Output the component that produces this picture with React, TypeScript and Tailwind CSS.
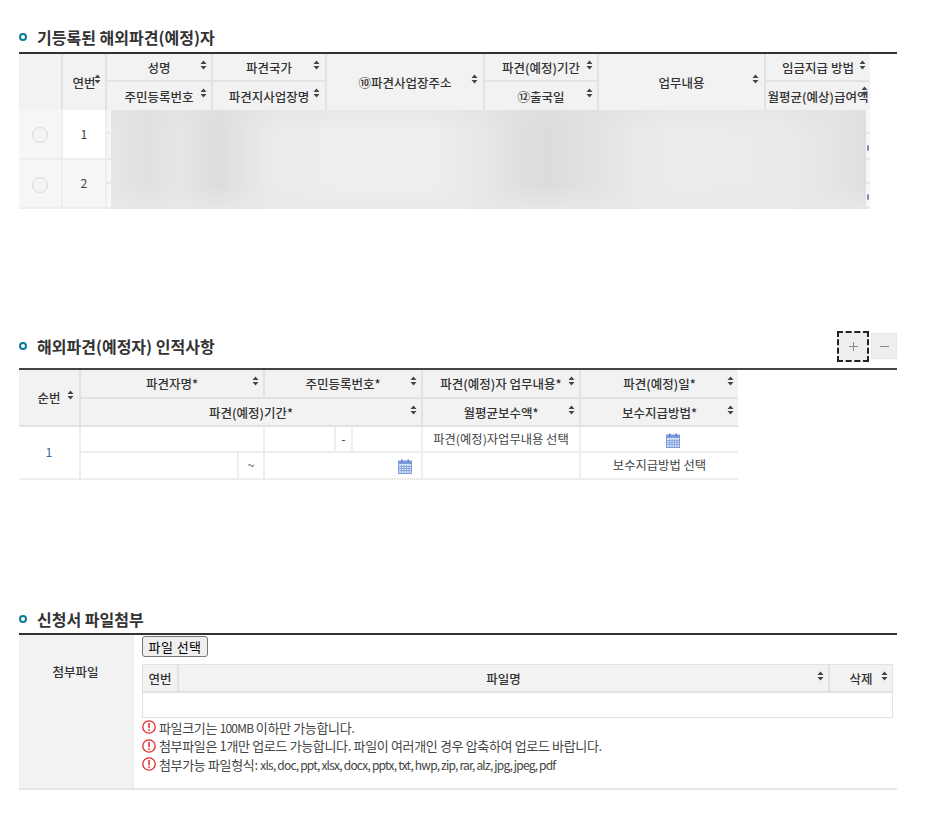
import React from "react";

const FONT = "font-['Noto_Sans_CJK_KR','Noto_Sans',sans-serif]";

function Sort({ className }: { className: string }) {
  return (
    <svg className={`absolute ${className}`} width="7" height="10" viewBox="0 0 7 10">
      <path d="M3.5 0.5 L6.5 4 H0.5 Z M3.5 9.5 L6.5 6 H0.5 Z" fill="#444" />
    </svg>
  );
}

function Calendar() {
  return (
    <svg width="14" height="15" viewBox="0 0 14 15" className="inline-block">
      <rect x="0.5" y="2" width="13" height="12.5" fill="#dbe4f7" stroke="#7c9ade" />
      <rect x="0.5" y="2" width="13" height="3" fill="#7c9ade" />
      <rect x="3" y="0.5" width="1.6" height="3" fill="#5f82cc" />
      <rect x="9.4" y="0.5" width="1.6" height="3" fill="#5f82cc" />
      <path d="M1 7.5H13M1 9.5H13M1 11.5H13M3.5 6V14M6 6V14M8.5 6V14M11 6V14" stroke="#7c9ade" strokeWidth="0.8" />
    </svg>
  );
}

function Alert() {
  return (
    <svg width="14" height="14" viewBox="0 0 14 14" className="shrink-0">
      <circle cx="7" cy="7" r="6.2" fill="#fff" stroke="#e5262b" strokeWidth="1.3" />
      <rect x="6.3" y="3" width="1.5" height="5.2" fill="#e5262b" />
      <rect x="6.3" y="9.3" width="1.5" height="1.6" fill="#e5262b" />
    </svg>
  );
}

function Title({ children }: { children: React.ReactNode }) {
  return (
    <div className="flex items-center gap-[10px]">
      <span className="w-[8px] h-[8px] rounded-full border-[2.5px] border-[#0b7a99] bg-white" />
      <h2 className="text-[16px] font-bold tracking-[0px] text-[#333]">{children}</h2>
    </div>
  );
}

const thn = "relative bg-[#f2f2f2] font-medium text-[12.5px] text-[#333] text-center whitespace-nowrap overflow-hidden border-[#e2e2e2] p-0 pt-[2px]";
const th = `${thn} border-r-2`;
const thb = "border-b-2";
const tdn = "text-center text-[12.3px] p-0 border-b-2 border-[#eeeeee]";
const td = `${tdn} border-r-2`;
const ink = "text-[#444]";

function RegisteredTable() {
  return (
    <div className="relative w-[851px]">
      <table className="table-fixed w-[851px] border-separate border-spacing-0">
        <colgroup>
          <col className="w-[44px]" />
          <col className="w-[44px]" />
          <col className="w-[106px]" />
          <col className="w-[114px]" />
          <col className="w-[158px]" />
          <col className="w-[114px]" />
          <col className="w-[167px]" />
          <col className="w-[104px]" />
        </colgroup>
        <thead>
          <tr className="h-[28px]">
            <th rowSpan={2} className={th}></th>
            <th rowSpan={2} className={th}>연번<Sort className="right-[4px] top-[20px]" /></th>
            <th className={`${th} ${thb}`}>성명<Sort className="right-[4px] top-[6px]" /></th>
            <th className={`${th} ${thb}`}>파견국가<Sort className="right-[5px] top-[6px]" /></th>
            <th rowSpan={2} className={th}>⑩파견사업장주소<Sort className="right-[5px] top-[20px]" /></th>
            <th className={`${th} ${thb}`}>파견(예정)기간<Sort className="right-[4px] top-[6px]" /></th>
            <th rowSpan={2} className={th}>업무내용<Sort className="right-[5px] top-[20px]" /></th>
            <th className={`${thn} ${thb}`}>임금지급 방법<Sort className="right-[4px] top-[6px]" /></th>
          </tr>
          <tr className="h-[28px]">
            <th className={th}>주민등록번호<Sort className="right-[4px] top-[6px]" /></th>
            <th className={th}>파견지사업장명<Sort className="right-[5px] top-[6px]" /></th>
            <th className={th}>⑫출국일<Sort className="right-[4px] top-[6px]" /></th>
            <th className={thn}>월평균(예상)급여액<Sort className="right-[2px] top-[4px]" /></th>
          </tr>
        </thead>
        <tbody>
          {[1, 2].map((n) => (
            <tr key={n} className={n === 1 ? "h-[50px]" : "h-[49px]"}>
              <td className={`${td} ${ink} bg-[#f6f6f6]`}>
                <span className="inline-block align-middle w-[16px] h-[16px] rounded-full border border-[#d9d9d9] bg-[#f4f4f4]" />
              </td>
              <td className={`${td} ${ink} ${n === 2 ? "bg-[#f6f6f6]" : "bg-white"}`}>{n}</td>
              <td colSpan={6} className="p-0 bg-[#f7f7f7] border-b-2 border-[#e8e8e8] align-top">
                <div className="h-[24px] border-b-2 border-[#e8e8e8]" />
              </td>
            </tr>
          ))}
        </tbody>
      </table>
      <div className="absolute left-[92px] top-[56px] w-[755px] h-[99px] bg-[linear-gradient(180deg,rgba(225,225,225,0.5)_0%,rgba(238,238,238,0)_22%,rgba(238,238,238,0)_75%,rgba(232,233,233,0.8)_100%),linear-gradient(90deg,#e6e6e6_0%,#e0e0e0_5%,#e6e6e6_9%,#dcdcdc_14%,#ebebeb_21%,#eeeeee_29%,#eeeeee_43%,#e8e8e8_49%,#dfdfdf_54%,#dcdcdc_58%,#e2e2e2_64%,#eaeaea_70%,#ececec_75%,#ebebeb_89%,#e3e3e3_97%,#dedede_100%)]" />
      <span className="absolute left-[848px] top-[91px] w-[2px] h-[6px] rounded-full bg-[#7f8fb8]" />
      <span className="absolute left-[848px] top-[140px] w-[2px] h-[6px] rounded-full bg-[#7f8fb8]" />
    </div>
  );
}

function PersonTable() {
  return (
    <table className="table-fixed w-[719px] border-separate border-spacing-0">
      <colgroup>
        <col className="w-[62px]" />
        <col className="w-[158px]" />
        <col className="w-[26px]" />
        <col className="w-[71px]" />
        <col className="w-[17px]" />
        <col className="w-[70px]" />
        <col className="w-[158px]" />
        <col className="w-[157px]" />
      </colgroup>
      <thead>
        <tr className="h-[29px]">
          <th rowSpan={2} className={`${th} ${thb}`}>순번<Sort className="right-[5px] top-[20px]" /></th>
          <th colSpan={2} className={`${th} ${thb}`}>파견자명*<Sort className="right-[4px] top-[6px]" /></th>
          <th colSpan={3} className={`${th} ${thb}`}>주민등록번호*<Sort className="right-[4px] top-[6px]" /></th>
          <th className={`${th} ${thb}`}>파견(예정)자 업무내용*<Sort className="right-[4px] top-[6px]" /></th>
          <th className={`${thn} ${thb}`}>파견(예정)일*<Sort className="right-[4px] top-[6px]" /></th>
        </tr>
        <tr className="h-[28px]">
          <th colSpan={5} className={`${th} ${thb}`}>파견(예정)기간*<Sort className="right-[4px] top-[6px]" /></th>
          <th className={`${th} ${thb}`}>월평균보수액*<Sort className="right-[4px] top-[6px]" /></th>
          <th className={`${thn} ${thb}`}>보수지급방법*<Sort className="right-[4px] top-[6px]" /></th>
        </tr>
      </thead>
      <tbody>
        <tr className="h-[26px]">
          <td rowSpan={2} className={`${td} text-[#3d6a9a]`}>1</td>
          <td colSpan={2} className={td}></td>
          <td className={td}></td>
          <td className={`${td} ${ink}`}>-</td>
          <td className={td}></td>
          <td className={`${td} ${ink}`}>파견(예정)자업무내용 선택</td>
          <td className={`${tdn} pl-[27px]`}><Calendar /></td>
        </tr>
        <tr className="h-[27px]">
          <td className={td}></td>
          <td className={`${td} ${ink}`}>~</td>
          <td colSpan={3} className={`${td} text-right pr-[9px]`}><Calendar /></td>
          <td className={td}></td>
          <td className={`${tdn} ${ink}`}>보수지급방법 선택</td>
        </tr>
      </tbody>
    </table>
  );
}

function FileTable() {
  return (
    <table className="table-fixed w-[751px] border-separate border-spacing-0 border border-[#e2e2e2]">
      <colgroup>
        <col className="w-[36px]" />
        <col />
        <col className="w-[62px]" />
      </colgroup>
      <thead>
        <tr className="h-[28px]">
          <th className={`${th} ${thb}`}>연번</th>
          <th className={`${th} ${thb}`}>파일명<Sort className="right-[4px] top-[6px]" /></th>
          <th className={`${thn} ${thb}`}>삭제<Sort className="right-[4px] top-[6px]" /></th>
        </tr>
      </thead>
      <tbody>
        <tr className="h-[24px]">
          <td colSpan={3}></td>
        </tr>
      </tbody>
    </table>
  );
}

const latin = "text-[12px] tracking-[-0.8px]";

export default function App() {
  const noteRow = "flex items-center gap-[3px] h-[18.5px] text-[13px] tracking-[-0.35px] text-[#444] whitespace-pre";
  return (
    <div className={`${FONT} w-[936px] h-[817px] bg-white pl-[19px] pr-[39px] pt-[22px] overflow-hidden`}>
      <section>
        <div className="h-[30px] flex items-center">
          <Title>기등록된 해외파견(예정)자</Title>
        </div>
        <div className="border-t-2 border-[#333]">
          <RegisteredTable />
        </div>
      </section>

      <section className="mt-[122px]">
        <div className="h-[30px] mb-[7px] flex items-center justify-between">
          <Title>해외파견(예정자) 인적사항</Title>
          <div className="flex items-center gap-[2px]">
            <button className="flex items-center justify-center w-[32px] h-[31px] border-2 border-dashed border-[#222] bg-[#eeeeee]">
              <svg width="9" height="9" viewBox="0 0 9 9"><path d="M4.5 0V9M0 4.5H9" stroke="#888" strokeWidth="1" /></svg>
            </button>
            <button className="flex items-center justify-center w-[26px] h-[26px] bg-[#eeeeee] border border-[#e8e8e8]">
              <svg width="9" height="9" viewBox="0 0 9 9"><path d="M0 4.5H9" stroke="#888" strokeWidth="1" /></svg>
            </button>
          </div>
        </div>
        <div className="border-t-2 border-[#444]">
          <PersonTable />
        </div>
      </section>

      <section className="mt-[124px]">
        <div className="h-[29px] flex items-center">
          <Title>신청서 파일첨부</Title>
        </div>
        <div className="border-t-2 border-[#333] border-b-2 border-b-[#e6e6e6] flex h-[157px]">
          <div className="w-[115px] bg-[#f2f2f2] border-r-2 border-[#eeeeee] text-center pt-[28px] text-[12.5px] font-medium text-[#333]">첨부파일</div>
          <div className="pl-[8px] pt-[1px]">
            <button className="block w-[66px] h-[21px] bg-[#efefef] border border-[#767676] rounded-[3px] text-[13px] leading-none tracking-[0.4px] text-black">파일 선택</button>
            <div className="mt-[7px]"><FileTable /></div>
            <ul>
              <li className={noteRow}>
                <Alert />
                <span>파일크기는 <span className={latin}>100MB</span> 이하만 가능합니다.</span>
              </li>
              <li className={noteRow}>
                <Alert />
                <span>첨부파일은 1개만 업로드 가능합니다. 파일이 여러개인 경우 압축하여 업로드 바랍니다.</span>
              </li>
              <li className={noteRow}>
                <Alert />
                <span>첨부가능 파일형식: <span className={latin}>xls, doc, ppt, xlsx, docx, pptx, txt, hwp, zip, rar, alz, jpg, jpeg, pdf</span></span>
              </li>
            </ul>
          </div>
        </div>
      </section>
    </div>
  );
}
